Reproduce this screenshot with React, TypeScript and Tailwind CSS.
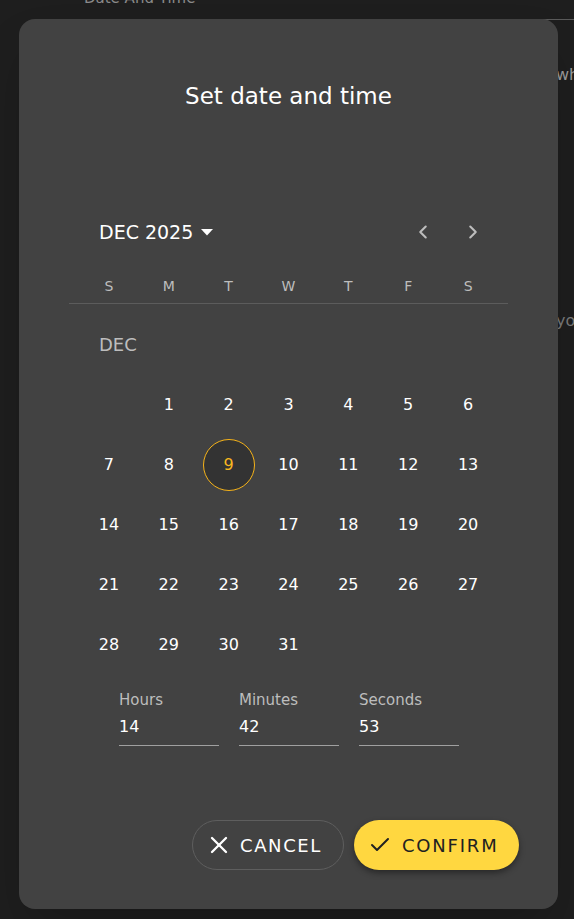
import { ChevronLeft, ChevronRight, X, Check } from "lucide-react"

const weekDays = ["S", "M", "T", "W", "T", "F", "S"]

// December 2025 starts on a Monday
const days: (number | null)[] = [null, ...Array.from({ length: 31 }, (_, i) => i + 1)]

const timeFields = [
    { label: "Hours", value: "14" },
    { label: "Minutes", value: "42" },
    { label: "Seconds", value: "53" },
]

export default function App() {
    return (
        <div className="relative h-[919px] overflow-hidden bg-[#1e1e1e] font-['DejaVu_Sans',sans-serif] text-white">
            {/* page behind the overlay */}
            <div className="pl-[84px] -mt-[12px] text-[15px] leading-5 text-[#8a8a8a]">Date And Time</div>
            <div className="ml-[493px] mt-[11px] h-px bg-[#5a5a5a]" />
            <div className="ml-[556px] mt-[43px] text-[16px] text-[#9a9a9a]">wh</div>
            <div className="ml-[556px] mt-[222px] text-[16px] text-[#7a7a7a]">yo</div>

            {/* dialog */}
            <div className="absolute left-[19px] top-[19px] flex h-[890px] w-[539px] flex-col rounded-[16px] bg-[#424242] shadow-2xl">
                <h2 className="pt-[61px] text-center text-[23px] leading-8 font-normal">Set date and time</h2>

                <div className="mx-[50px] mt-[96px]">
                    {/* month header */}
                    <div className="flex h-12 items-center">
                        <button className="ml-[30px] flex items-center gap-2 text-[19px] font-medium">
                            DEC 2025
                            <svg width="12" height="7" viewBox="0 0 12 7" className="mt-px">
                                <path d="M0 0 L12 0 L6 6.5 Z" fill="white" />
                            </svg>
                        </button>
                        <div className="ml-auto mr-[11px] flex gap-[2px]">
                            <button className="flex h-12 w-12 items-center justify-center text-[#bdbdbd]">
                                <ChevronLeft size={22} strokeWidth={2.25} />
                            </button>
                            <button className="flex h-12 w-12 items-center justify-center text-[#bdbdbd]">
                                <ChevronRight size={22} strokeWidth={2.25} />
                            </button>
                        </div>
                    </div>

                    {/* weekdays */}
                    <div className="mt-3 grid h-9 grid-cols-7 items-center border-b border-[#5c5c5c] px-[10px] pt-px text-[14px] text-[#bdbdbd]">
                        {weekDays.map((d, i) => (
                            <span key={i} className="text-center">{d}</span>
                        ))}
                    </div>

                    {/* month label + days */}
                    <div className="pt-[10px]">
                        <div className="flex h-[60px] items-center pl-[30px] text-[18px] text-[#bdbdbd]">DEC</div>
                        <div className="grid grid-cols-7 px-[10px]">
                            {days.map((d, i) => (
                                <div key={i} className="flex h-[60px] items-center justify-center pt-px">
                                    {d === 9 ? (
                                        <span className="flex h-[52px] w-[52px] items-center justify-center rounded-full border border-[#f6b319] bg-[#333333] text-[16px] font-medium text-[#f8b71f]">
                                            {d}
                                        </span>
                                    ) : d ? (
                                        <span className="text-[16px] font-medium">{d}</span>
                                    ) : null}
                                </div>
                            ))}
                        </div>
                    </div>
                </div>

                {/* time inputs */}
                <div className="mt-[13px] flex gap-5 pl-[100px]">
                    {timeFields.map((f) => (
                        <div key={f.label} className="w-[100px]">
                            <div className="h-[26px] text-[15px] leading-[26px] text-[#bdbdbd]">{f.label}</div>
                            <div className="border-b border-[#a0a0a0] pt-px pb-[5px] text-[16px] leading-[26px]">{f.value}</div>
                        </div>
                    ))}
                </div>

                {/* actions */}
                <div className="mt-auto mb-[39px] mr-[39px] flex justify-end gap-[10px]">
                    <button className="flex h-[50px] w-[152px] items-center gap-[7px] rounded-full border border-[#5e5e5e] pl-[12px] text-[18px] tracking-[1.6px]">
                        <X size={28} strokeWidth={2} />
                        CANCEL
                    </button>
                    <button className="flex h-[50px] w-[165px] items-center gap-[10px] rounded-full bg-[#ffd740] pl-[14px] text-[18px] tracking-[1.8px] text-[#212121] shadow-[0_3px_6px_rgba(0,0,0,0.4)]">
                        <Check size={24} strokeWidth={2} />
                        CONFIRM
                    </button>
                </div>
            </div>
        </div>
    )
}
